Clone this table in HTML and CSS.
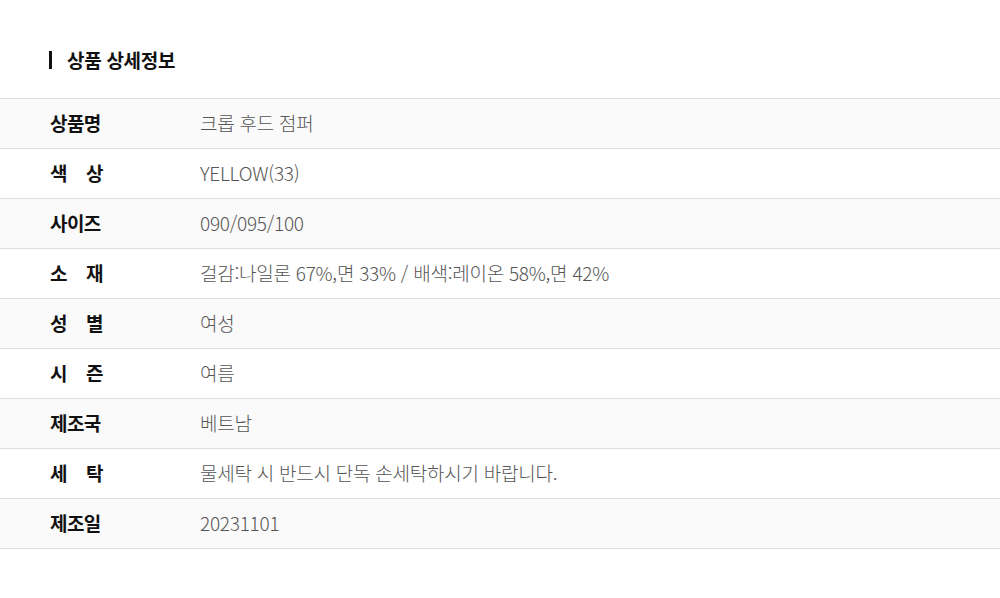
FILE: index.html
```html
<!DOCTYPE html>
<html lang="ko">
<head>
<meta charset="utf-8">
<link rel="stylesheet" href="styles.css">
</head>
<body>
<section class="detail">
  <h2 class="title"><span class="bar"></span>상품 상세정보</h2>
  <div class="table">
    <div class="row"><div class="label">상품명</div><div class="value">크롭 후드 점퍼</div></div>
    <div class="row"><div class="label spread"><span>색</span><span>상</span></div><div class="value">YELLOW(33)</div></div>
    <div class="row"><div class="label">사이즈</div><div class="value">090/095/100</div></div>
    <div class="row"><div class="label spread"><span>소</span><span>재</span></div><div class="value">걸감:나일론 67%,면 33% / 배색:레이온 58%,면 42%</div></div>
    <div class="row"><div class="label spread"><span>성</span><span>별</span></div><div class="value">여성</div></div>
    <div class="row"><div class="label spread"><span>시</span><span>즌</span></div><div class="value">여름</div></div>
    <div class="row"><div class="label">제조국</div><div class="value">베트남</div></div>
    <div class="row"><div class="label spread"><span>세</span><span>탁</span></div><div class="value">물세탁 시 반드시 단독 손세탁하시기 바랍니다.</div></div>
    <div class="row"><div class="label">제조일</div><div class="value">20231101</div></div>
  </div>
</section>
</body>
</html>
```
FILE: styles.css
```css
* { box-sizing: border-box; }
html, body { margin: 0; padding: 0; background: #fff; }
body {
  font-family: "Noto Sans CJK KR", "Noto Sans", sans-serif;
  color: #111;
}
.detail { padding-top: 48px; }
.title {
  margin: 0 0 26px 49px;
  font-size: 19px;
  font-weight: 700;
  line-height: 24px;
  height: 24px;
  letter-spacing: -0.3px;
  display: flex;
  align-items: center;
}
.bar {
  width: 3px;
  height: 18px;
  background: #111;
  margin-right: 15px;
}
.table { border-top: 1px solid #ddd; }
.row {
  display: flex;
  align-items: center;
  height: 50px;
  border-bottom: 1px solid #ddd;
  padding-left: 50px;
  padding-bottom: 3px;
}
.row:nth-child(odd) { background: #fafafa; }
.label {
  width: 150px;
  font-size: 19px;
  font-weight: 700;
  letter-spacing: -0.6px;
  color: #111;
}
.label.spread { display: flex; justify-content: space-between; width: 53px; margin-right: 97px; }
.value {
  font-size: 19px;
  font-weight: 300;
  color: #555;
  letter-spacing: -0.25px;
}
```
